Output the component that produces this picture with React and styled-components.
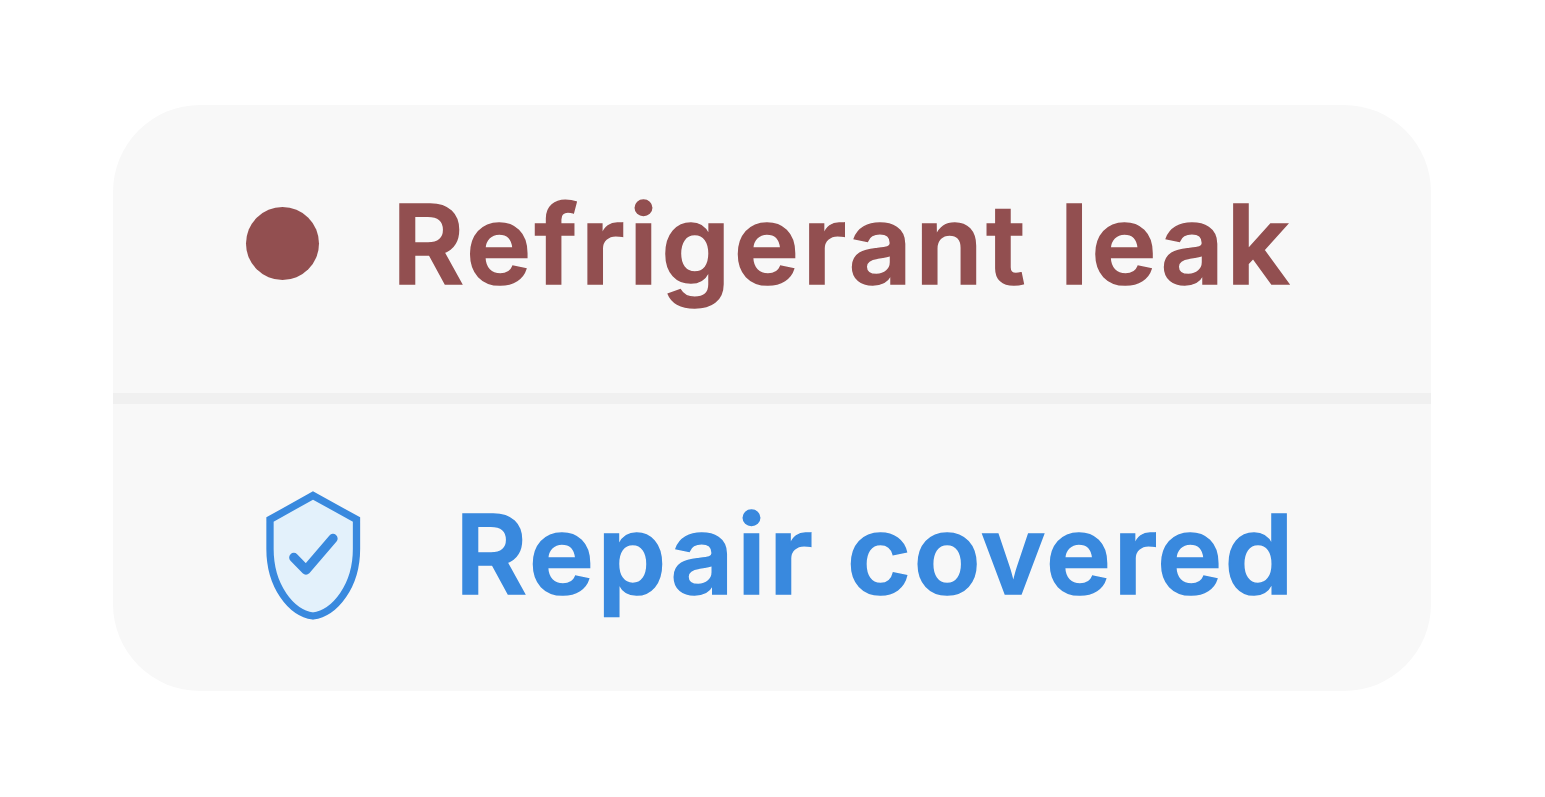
import React from 'react';
import styled, { createGlobalStyle } from 'styled-components';

const GlobalStyle = createGlobalStyle`
  body {
    margin: 0;
    background: #ffffff;
  }
`;

const Page = styled.main`
  padding: 105px 113px;
`;

const Card = styled.section`
  box-sizing: border-box;
  width: 1318px;
  height: 586px;
  border-radius: 87px;
  background: #f8f8f8;
  overflow: hidden;
`;

const Row = styled.div`
  box-sizing: border-box;
  display: flex;
  align-items: center;
  height: ${props => props.$height}px;
  padding-left: ${props => props.$inset}px;
  padding-top: ${props => props.$top}px;
  padding-bottom: ${props => props.$bottom}px;
  color: ${props => props.$color};
`;

const Divider = styled.div`
  height: 11px;
  background: #f0f0f0;
`;

const Dot = styled.span`
  flex: none;
  width: 73px;
  height: 73px;
  border-radius: 50%;
  background: currentColor;
`;

const ShieldIcon = styled.svg`
  flex: none;
  width: 96px;
  height: 130px;
`;

const Label = styled.span`
  margin-left: ${props => props.$gap}px;
  margin-bottom: ${props => props.$lift}px;
  font-family: Inter, "Liberation Sans", sans-serif;
  font-size: 110.5px;
  font-weight: 600;
  line-height: 112px;
  white-space: pre;
  -webkit-text-stroke: 1.6px currentColor;
`;

const Word = styled.span`
  letter-spacing: ${props => props.$tracking}px;
`;

const Shield = () => (
  <ShieldIcon viewBox="0 0 96 130" fill="none" stroke="currentColor">
    <path
      d="M48 4.5 L91.5 28.5 V58 C91.5 95 70 122 48 125 C26 122 5 95 5 58 V28.5 Z"
      fill="#e3f1fb"
      strokeWidth="7.3"
    />
    <path
      d="M28.8 66.5 L41 79 L68 47.5"
      strokeWidth="9.3"
      strokeLinecap="round"
      strokeLinejoin="round"
    />
  </ShieldIcon>
);

const App = () => (
  <>
    <GlobalStyle />
    <Page>
      <Card>
        <Row $height={288} $inset={133} $top={0} $bottom={11} $color="#924f50">
          <Dot />
          <Label $gap={73} $lift={-1}>
            <Word $tracking={3.3}>Refrigerant </Word>
            <Word $tracking={2.7}>leak</Word>
          </Label>
        </Row>
        <Divider />
        <Row $height={287} $inset={152} $top={16} $bottom={0} $color="#3989de">
          <Shield />
          <Label $gap={94} $lift={4}>
            <Word $tracking={3.1}>Repair </Word>
            <Word $tracking={2.2}>covered</Word>
          </Label>
        </Row>
      </Card>
    </Page>
  </>
);

export default App;
